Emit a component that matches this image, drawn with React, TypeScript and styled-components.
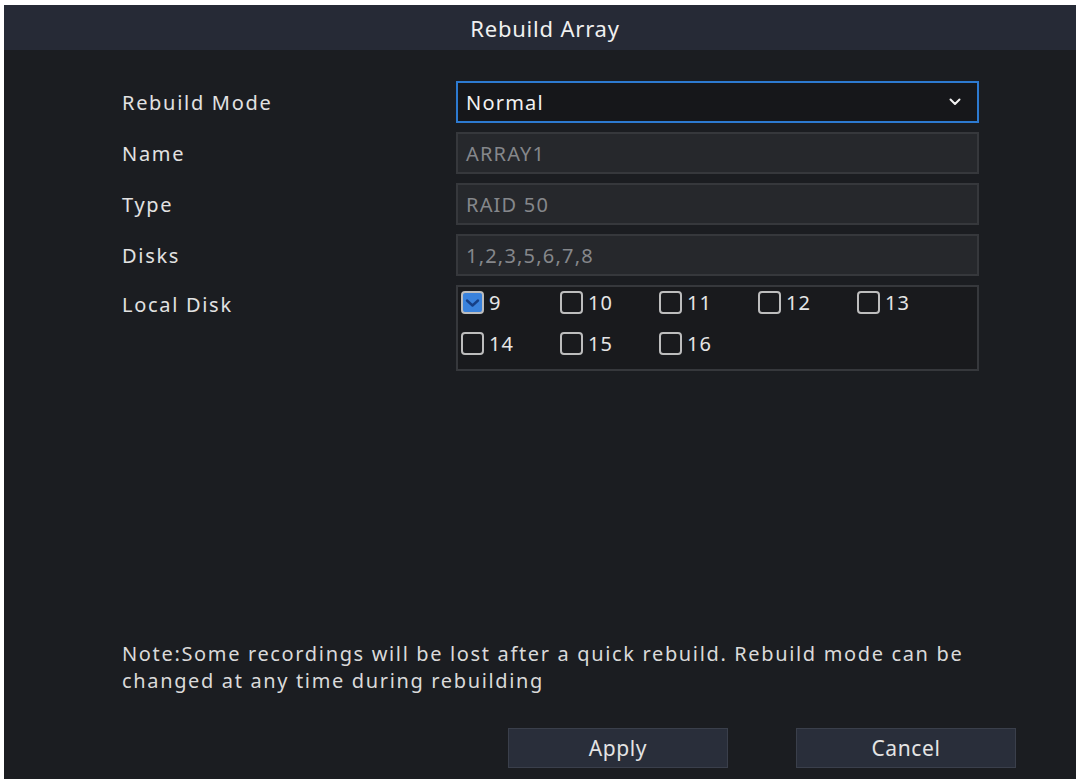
import styled, { createGlobalStyle } from "styled-components";

type FieldType = {
  label: string;
  value: string;
};

const FIELD_LIST: FieldType[] = [
  { label: "Name", value: "ARRAY1" },
  { label: "Type", value: "RAID 50" },
  { label: "Disks", value: "1,2,3,5,6,7,8" },
];

const DISK_LIST = [9, 10, 11, 12, 13, 14, 15, 16];
const CHECKED_DISKS = [9];

const GlobalStyle = createGlobalStyle`
  * {
    box-sizing: border-box;
  }

  body {
    margin: 0;
    background-color: #ffffff;
    font-family: "Noto Sans", "Open Sans", sans-serif;
  }
`;

const Chevron = () => (
  <svg width="12" height="8" viewBox="0 0 12 8">
    <polyline
      points="1.5,1.5 6,6 10.5,1.5"
      fill="none"
      stroke="#f2f2f2"
      strokeWidth="2"
      strokeLinecap="round"
      strokeLinejoin="round"
    />
  </svg>
);

const App = () => {
  return (
    <StFrame>
      <GlobalStyle />
      <StPanel>
        <StHeader>Rebuild Array</StHeader>
        <StBody>
          <StForm>
            <StLabel>Rebuild Mode</StLabel>
            <StSelect>
              <span>Normal</span>
              <Chevron />
            </StSelect>

            {FIELD_LIST.map(({ label, value }) => (
              <StRow key={label}>
                <StLabel>{label}</StLabel>
                <StInput>{value}</StInput>
              </StRow>
            ))}

            <StLabel alignTop>Local Disk</StLabel>
            <StDiskBox>
              {DISK_LIST.map((disk) => {
                const checked = CHECKED_DISKS.includes(disk);
                return (
                  <StDiskItem key={disk}>
                    <StCheck checked={checked}>
                      {checked && (
                        <svg width="15" height="11" viewBox="0 0 15 11">
                          <polyline
                            points="2,3.5 7.5,8.5 13,3.5"
                            fill="none"
                            stroke="#163f86"
                            strokeWidth="2.4"
                            strokeLinecap="round"
                            strokeLinejoin="round"
                          />
                        </svg>
                      )}
                    </StCheck>
                    <span>{disk}</span>
                  </StDiskItem>
                );
              })}
            </StDiskBox>
          </StForm>

          <StNote>
            <span>
              Note:Some recordings will be lost after a quick rebuild. Rebuild
              mode can be
            </span>
            <span>changed at any time during rebuilding</span>
          </StNote>

          <StFooter>
            <StButton>Apply</StButton>
            <StButton>Cancel</StButton>
          </StFooter>
        </StBody>
      </StPanel>
    </StFrame>
  );
};

export default App;

const StFrame = styled.div`
  width: 1081px;
  height: 779px;
  padding: 5px 5px 0 4px;
  overflow: hidden;
`;

const StPanel = styled.div`
  display: flex;
  flex-direction: column;
  width: 100%;
  height: 100%;
  background-color: #1b1d21;
`;

const StHeader = styled.div`
  display: flex;
  align-items: center;
  justify-content: center;
  height: 45px;
  background-color: #262a36;
  color: #f0f0f0;
  font-size: 22px;
  letter-spacing: 0.8px;
  padding-left: 10px;
`;

const StBody = styled.div`
  display: flex;
  flex-direction: column;
  flex: 1;
  padding: 31px 60px 11px 118px;
`;

const StForm = styled.div`
  display: grid;
  grid-template-columns: 334px 523px;
  grid-auto-rows: 42px;
  row-gap: 9px;
`;

const StRow = styled.div`
  display: contents;
`;

const StLabel = styled.div<{ alignTop?: boolean }>`
  display: flex;
  align-items: ${({ alignTop }) => (alignTop ? "flex-start" : "center")};
  padding-top: ${({ alignTop }) => (alignTop ? "6px" : "0")};
  color: #e2e2e2;
  font-size: 20px;
  letter-spacing: 1.7px;
`;

const StSelect = styled.div`
  display: flex;
  align-items: center;
  justify-content: space-between;
  padding: 0 16px 0 8px;
  background-color: #16171a;
  border: 2px solid #2d7ad0;
  color: #f2f2f2;
  font-size: 20px;
  letter-spacing: 1.2px;
`;

const StInput = styled.div`
  display: flex;
  align-items: center;
  padding: 0 8px;
  background-color: #26282c;
  border: 2px solid #36383c;
  color: #85878b;
  font-size: 20px;
  letter-spacing: 1.2px;
`;

const StDiskBox = styled.div`
  grid-row: span 2;
  height: 86px;
  display: grid;
  grid-template-columns: repeat(5, 99px);
  align-content: start;
  row-gap: 11px;
  padding: 0 3px;
  border: 2px solid #36383c;
  background-color: #191a1d;
`;

const StDiskItem = styled.label`
  display: flex;
  align-items: center;
  gap: 5px;
  height: 30px;
  color: #e6e6e6;
  font-size: 20px;
  letter-spacing: 1px;
`;

const StCheck = styled.span<{ checked: boolean }>`
  display: flex;
  align-items: center;
  justify-content: center;
  width: 23px;
  height: 23px;
  border: 2px solid #bdbdbd;
  border-radius: 4px;
  background-color: ${({ checked }) => (checked ? "#3a82dc" : "transparent")};
`;

const StNote = styled.p`
  display: flex;
  flex-direction: column;
  margin: auto 0 0 0;
  color: #dadada;
  font-size: 20px;
  letter-spacing: 1.65px;
  line-height: 27px;
  white-space: nowrap;
`;

const StFooter = styled.div`
  display: flex;
  justify-content: flex-end;
  gap: 68px;
  margin-top: 34px;
`;

const StButton = styled.button`
  width: 220px;
  height: 40px;
  background-color: #292e3a;
  border: 1px solid #3a3f4b;
  color: #e4e4e4;
  font-family: "Noto Sans", "Open Sans", sans-serif;
  font-size: 21px;
  letter-spacing: 0.6px;
  cursor: pointer;
`;
